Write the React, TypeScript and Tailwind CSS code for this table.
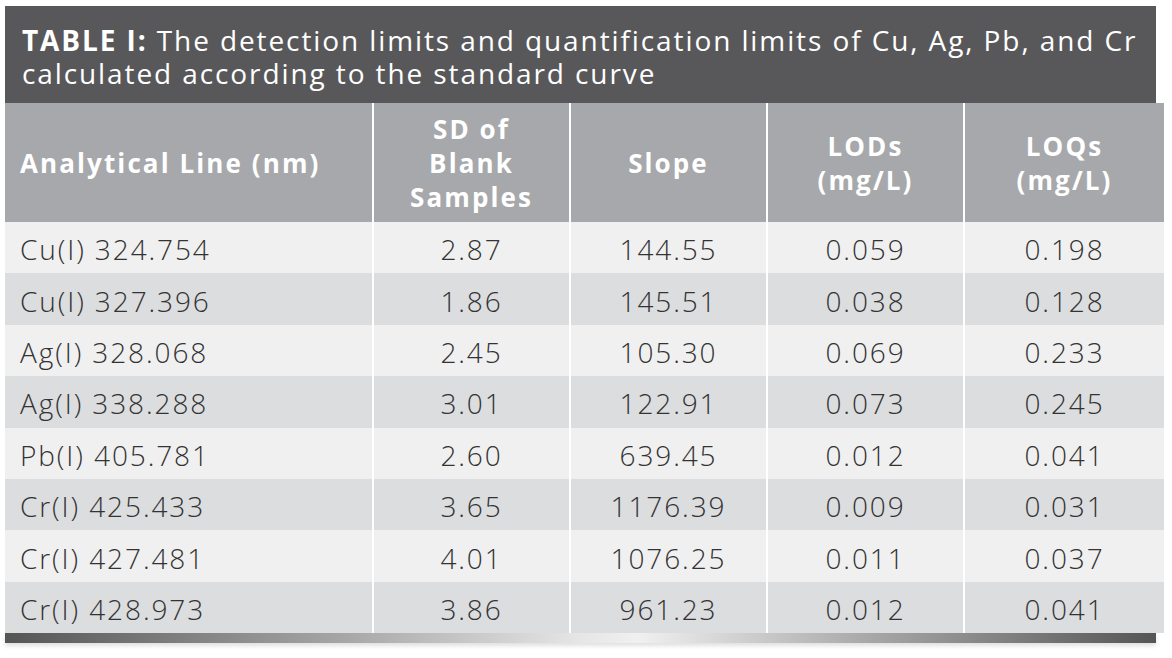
import React from "react";

const rows = [
  ["Cu(I) 324.754", "2.87", "144.55", "0.059", "0.198"],
  ["Cu(I) 327.396", "1.86", "145.51", "0.038", "0.128"],
  ["Ag(I) 328.068", "2.45", "105.30", "0.069", "0.233"],
  ["Ag(I) 338.288", "3.01", "122.91", "0.073", "0.245"],
  ["Pb(I) 405.781", "2.60", "639.45", "0.012", "0.041"],
  ["Cr(I) 425.433", "3.65", "1176.39", "0.009", "0.031"],
  ["Cr(I) 427.481", "4.01", "1076.25", "0.011", "0.037"],
  ["Cr(I) 428.973", "3.86", "961.23", "0.012", "0.041"],
];

const cols = "grid grid-cols-[367px_195px_195px_195px_199px] gap-x-[2px]";

export default function App() {
  return (
    <div className="w-[1172px] h-[658px] bg-white pt-[6px] pl-[5px] font-['Open_Sans',sans-serif]">
      <div className="w-[1151px]">
        {/* title bar */}
        <div className="bg-[#58585a] h-[97px] pl-[17px] pt-[18px] text-white text-[28px] leading-[33px] tracking-[1.9px] whitespace-nowrap">
          <span className="font-bold">TABLE I:</span> The detection limits and quantification limits of Cu, Ag, Pb, and Cr
          <br />
          calculated according to the standard curve
        </div>
        <div className="bg-white">
          <div className={`${cols} h-[119px] text-white font-bold text-[26px] leading-[34px] tracking-[2.1px]`}>
            <div className="bg-[#a7a8ab] flex items-center pl-[15px]">Analytical Line (nm)</div>
            <div className="bg-[#a7a8ab] flex items-center justify-center text-center">SD of<br />Blank<br />Samples</div>
            <div className="bg-[#a7a8ab] flex items-center justify-center">Slope</div>
            <div className="bg-[#a7a8ab] flex items-center justify-center text-center">LODs<br />(mg/L)</div>
            <div className="bg-[#a7a8ab] flex items-center justify-center text-center">LOQs<br />(mg/L)</div>
          </div>
          {rows.map((r, i) => {
            const bg = i % 2 === 0 ? "bg-[#f0f0f0]" : "bg-[#dcdddf]";
            return (
              <div key={i} className={`${cols} h-[51.4px] text-[#333] font-light text-[28px] tracking-[1.9px]`}>
                <div className={`${bg} flex items-center pl-[15px] pt-[3px]`}>{r[0]}</div>
                {r.slice(1).map((c, j) => (
                  <div key={j} className={`${bg} flex items-center justify-center pt-[3px]`}>{c}</div>
                ))}
              </div>
            );
          })}
        </div>
        <div className="h-[10px] bg-[linear-gradient(to_right,#555,#a8a8a8_30%,#e6e6e6_50%,#f0f0f0_55%,#a8a8a8_75%,#555)] shadow-[0_3px_4px_rgba(0,0,0,0.12)]" />
      </div>
    </div>
  );
}
